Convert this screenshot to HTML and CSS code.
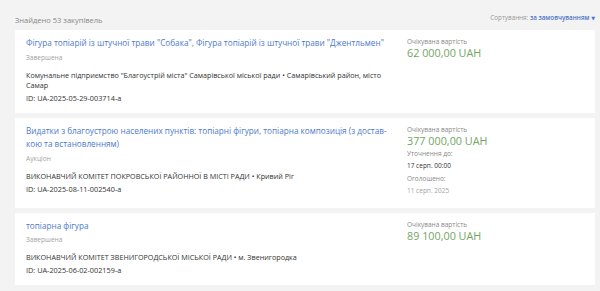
FILE: index.html
```html
<!DOCTYPE html>
<html lang="uk">
<head>
    <meta charset="UTF-8">
    <title>Закупівлі</title>
    <link rel="stylesheet" href="styles.css">
</head>
<body>
    <div class="results">
        <div class="results-head">
            <span class="found">Знайдено 53 закупівель</span>
            <span class="sort">Сортування: <a href="#">за замовчуванням</a> <span class="caret">▼</span></span>
        </div>

        <div class="tender">
            <div class="tender-main">
                <a class="tender-title" href="#">Фігура топіарій із штучної трави "Собака", Фігура топіарій із штучної трави "Джентльмен"</a>
                <div class="tender-status">Завершена</div>
                <div class="tender-org">Комунальне підприємство "Благоустрій міста" Самарівської міської ради • Самарівський район, місто Самар</div>
                <div class="tender-id">ID: UA-2025-05-29-003714-a</div>
            </div>
            <div class="tender-side">
                <div class="side-label">Очікувана вартість</div>
                <div class="price">62 000,00 UAH</div>
            </div>
        </div>

        <div class="tender">
            <div class="tender-main">
                <a class="tender-title" href="#">Видатки з благоустрою населених пунктів: топіарні фігури, топіарна композиція (з достав&shy;кою та встановленням)</a>
                <div class="tender-status">Аукціон</div>
                <div class="tender-org">ВИКОНАВЧИЙ КОМІТЕТ ПОКРОВСЬКОЇ РАЙОННОЇ В МІСТІ РАДИ • Кривий Ріг</div>
                <div class="tender-id">ID: UA-2025-08-11-002540-a</div>
            </div>
            <div class="tender-side">
                <div class="side-label">Очікувана вартість</div>
                <div class="price">377 000,00 UAH</div>
                <div class="side-label side-row">Уточнення до:</div>
                <div class="side-value side-row">17 серп. 00:00</div>
                <div class="side-label side-row">Оголошено:</div>
                <div class="side-date side-row">11 серп. 2025</div>
            </div>
        </div>

        <div class="tender">
            <div class="tender-main">
                <a class="tender-title" href="#">топіарна фігура</a>
                <div class="tender-status">Завершена</div>
                <div class="tender-org">ВИКОНАВЧИЙ КОМІТЕТ ЗВЕНИГОРОДСЬКОЇ МІСЬКОЇ РАДИ • м. Звенигородка</div>
                <div class="tender-id">ID: UA-2025-06-02-002159-a</div>
            </div>
            <div class="tender-side">
                <div class="side-label">Очікувана вартість</div>
                <div class="price">89 100,00 UAH</div>
            </div>
        </div>
    </div>
</body>
</html>
```
FILE: styles.css
```css
/* General */
body {
    margin: 0;
    background: #f3f3f3;
    font-family: 'Open Sans', 'DejaVu Sans', sans-serif;
    color: #333;
}

.results {
    padding: 8px 5px 0 15px;
}

.results-head {
    display: flex;
    justify-content: space-between;
    align-items: center;
    height: 21px;
    margin-bottom: 1px;
}

.found {
    font-size: 7.5px;
    color: #888;
    padding-top: 2px;
}

.sort {
    font-size: 6.3px;
    color: #999;
    padding-bottom: 2px;
}

.sort a {
    color: #4a74c4;
    text-decoration: none;
    font-weight: 600;
}

.caret {
    color: #4a74c4;
    font-size: 5px;
}

/* Tender card */
.tender {
    display: flex;
    background: #fff;
    padding: 6px 11px 10px 11px;
    margin-bottom: 5px;
}

.tender-main {
    width: 370px;
    flex-shrink: 0;
    margin-right: 11px;
}

.tender-title {
    display: block;
    color: #4c7acb;
    text-decoration: none;
    font-size: 8.2px;
    line-height: 13.5px;
    hyphens: manual;
}

.tender-status {
    font-size: 6.6px;
    color: #a3a3a3;
    line-height: 9px;
    margin-top: 3px;
}

.tender-org {
    font-size: 7.2px;
    line-height: 10px;
    margin-top: 8px;
    color: #333;
}

.tender-id {
    font-size: 7.3px;
    line-height: 10px;
    margin-top: 3px;
}

/* Right side */
.tender-side {
    flex: 1;
    padding-top: 1px;
}

.side-label {
    font-size: 6.5px;
    line-height: 9px;
    color: #888;
}

.price {
    font-size: 10.8px;
    line-height: 14px;
    color: #72a664;
}

.side-row {
    line-height: 12.6px;
}

.side-value {
    font-size: 6.5px;
    color: #333;
}

.side-date {
    font-size: 6.5px;
    color: #a3a3a3;
}
```
